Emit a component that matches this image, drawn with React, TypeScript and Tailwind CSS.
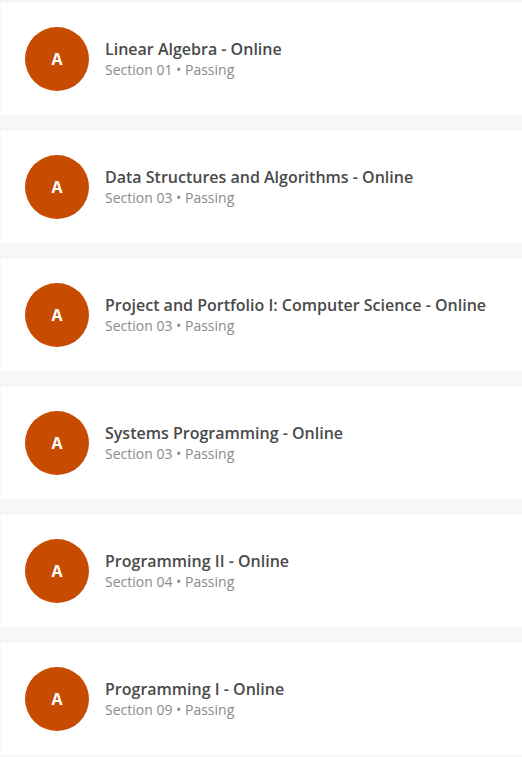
import React from "react";

const courses = [
  { title: "Linear Algebra - Online", section: "Section 01" },
  { title: "Data Structures and Algorithms - Online", section: "Section 03" },
  { title: "Project and Portfolio I: Computer Science - Online", section: "Section 03" },
  { title: "Systems Programming - Online", section: "Section 03" },
  { title: "Programming II - Online", section: "Section 04" },
  { title: "Programming I - Online", section: "Section 09" },
];

export default function App() {
  return (
    <div
      className="w-[522px] h-[757px] bg-[#f7f7f7] pt-[3px] pl-[1px] flex flex-col gap-4"
      style={{ fontFamily: '"Open Sans", "Liberation Sans", sans-serif' }}
    >
      {courses.map((c, i) => (
        <div key={i} className="bg-white h-[112px] flex items-center px-6 gap-4 shrink-0">
          <div className="w-16 h-16 rounded-full bg-[#c74b00] flex items-center justify-center text-white text-base font-bold shrink-0">
            A
          </div>
          <div className="flex flex-col">
            <div className="text-base leading-5 font-semibold text-[#4a4a4a]">{c.title}</div>
            <div className="text-sm leading-5 mt-[1px] text-[#8a8a8a]">
              {c.section} • Passing
            </div>
          </div>
        </div>
      ))}
    </div>
  );
}
